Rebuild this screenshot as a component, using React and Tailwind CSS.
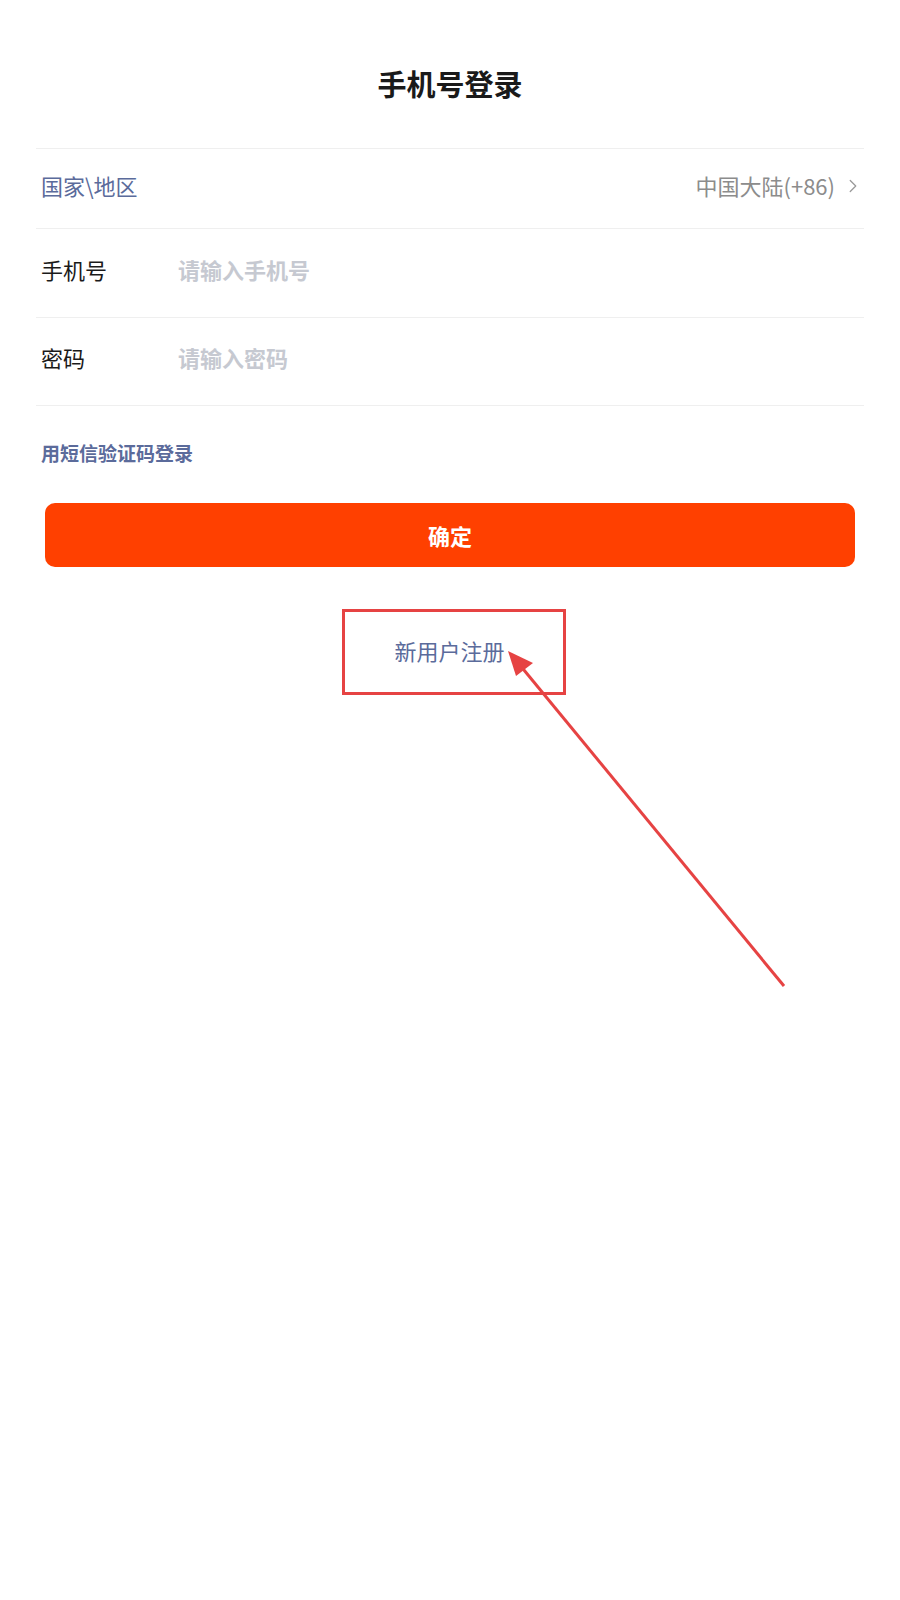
import { ChevronRight } from 'lucide-react'

const font = { fontFamily: '"Noto Sans CJK SC", "Noto Sans", sans-serif' }

function Row({ label, placeholder, type = 'text' }) {
  return (
    <div className="flex items-center h-[88.5px] border-b border-[#efefef] pl-[5px] pb-[7px]">
      <span className="w-[137px] shrink-0 text-[22px] text-[#1a1a1a]">{label}</span>
      <input
        type={type}
        placeholder={placeholder}
        className="flex-1 bg-transparent outline-none text-[22px] font-bold text-[#1a1a1a] placeholder:text-[#c6c9d1]"
      />
    </div>
  )
}

export default function App() {
  return (
    <div className="relative w-[900px] min-h-[1600px] bg-white" style={font}>
      {/* Title */}
      <h1 className="pt-[63px] h-[104px] text-center text-[29px] leading-[40px] font-bold text-[#1a1a1a]">
        手机号登录
      </h1>

      <div className="mt-[44px] px-[36px]">
        {/* Country */}
        <div className="flex items-center justify-between h-[81px] border-y border-[#efefef] pl-[5px] pb-[7px]">
          <span className="text-[22px] text-[#5b6b9b]">国家\地区</span>
          <span className="flex items-center gap-[7px] text-[22px] text-[#8c8c8c]">
            中国大陆(+86)
            <ChevronRight className="w-[22px] h-[22px] mt-[2px] text-[#9a9a9a]" strokeWidth={1.4} />
          </span>
        </div>

        <Row label="手机号" placeholder="请输入手机号" />
        <Row label="密码" placeholder="请输入密码" type="password" />

        {/* SMS login */}
        <div className="pl-[5px] pt-[34px] text-[19px] leading-[26px] font-bold text-[#5b6b9b]">
          用短信验证码登录
        </div>

        {/* Confirm */}
        <div className="px-[9px] mt-[37px]">
          <button className="w-full h-[64px] rounded-[10px] bg-[#ff4000] text-white text-[22px] font-bold">
            确定
          </button>
        </div>
      </div>

      {/* Register */}
      <div className="flex justify-center mt-[42px] pl-[7px]">
        <div className="w-[224px] h-[86px] border-[3px] border-[#e64343] flex items-center pl-[50px] pb-[3px]">
          <span className="text-[22px] text-[#5b6b9b]">新用户注册</span>
        </div>
      </div>

      {/* Annotation arrow */}
      <svg
        className="absolute left-0 top-0 pointer-events-none"
        width="900"
        height="1600"
        viewBox="0 0 900 1600"
      >
        <line x1="784" y1="986" x2="519" y2="664" stroke="#e64343" strokeWidth="3" />
        <polygon points="508,651 533,663 516,676" fill="#e64343" />
      </svg>
    </div>
  )
}
